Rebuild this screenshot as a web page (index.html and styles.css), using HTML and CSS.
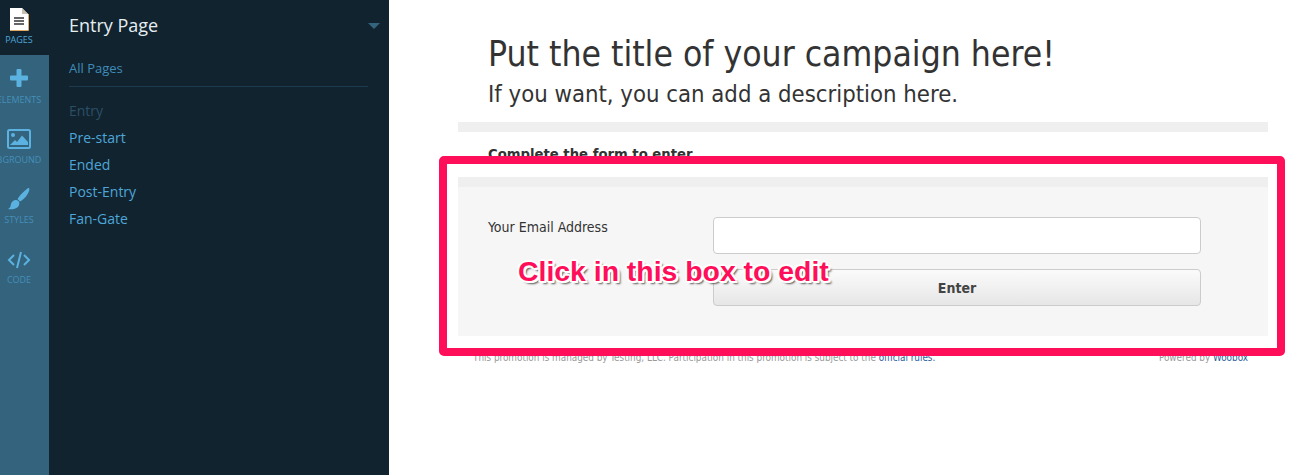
FILE: index.html
```html
<!DOCTYPE html>
<html lang="en">
<head>
  <meta charset="UTF-8">
  <title>Entry Page</title>
  <link rel="stylesheet" href="styles.css">
</head>
<body>

  <!-- Icon rail -->
  <nav class="rail">
    <a class="rail-item active">
      <svg class="rail-icon icon-page" width="20" height="24" viewBox="0 0 20 24">
        <path d="M1 1H13L19 7V23H1Z" fill="#fff"/>
        <path d="M1 23.500H19.500V7" fill="none" stroke="#e0a860" stroke-width="1"/>
        <path d="M13 1V7H19Z" fill="#c8c0b0"/>
        <path d="M5 11H15M5 14H15M5 17H15" stroke="#333" stroke-width="1.4"/>
      </svg>
      <span>PAGES</span>
    </a>
    <a class="rail-item">
      <svg class="rail-icon" width="18" height="18" viewBox="0 0 18 18">
        <path d="M7.500 0H10.500A1 1 0 0 1 11.500 1V6.500H17A1 1 0 0 1 18 7.500V10.500A1 1 0 0 1 17 11.500H11.500V17A1 1 0 0 1 10.500 18H7.500A1 1 0 0 1 6.500 17V11.500H1A1 1 0 0 1 0 10.500V7.500A1 1 0 0 1 1 6.500H6.500V1A1 1 0 0 1 7.500 0Z" fill="#5bb2e0"/>
      </svg>
      <span>ELEMENTS</span>
    </a>
    <a class="rail-item">
      <svg class="rail-icon icon-image" width="24" height="20" viewBox="0 0 24 20">
        <rect x="1" y="1" width="22" height="18" rx="1.500" fill="none" stroke="#5bb2e0" stroke-width="2"/>
        <circle cx="6" cy="6" r="2" fill="#5bb2e0"/>
        <path d="M3 16L8 11L10 13L15 6.500L21 13V16Z" fill="#5bb2e0"/>
      </svg>
      <span>BGROUND</span>
    </a>
    <a class="rail-item">
      <svg class="rail-icon icon-brush" width="24" height="24" viewBox="0 0 24 24">
        <path d="M22 1C23 2 22 5 20 8C18 11 15 13.500 13 14.500L10.500 12C12 9.500 15 6 17.500 4C19.500 2 21 0.500 22 1Z" fill="#5bb2e0"/>
        <path d="M9.500 13C12 13.500 13 15.500 12 18C11 21 7 23 1 22C3.500 21 3.500 19 4 17C4.500 14.500 7 12.500 9.500 13Z" fill="#5bb2e0"/>
      </svg>
      <span>STYLES</span>
    </a>
    <a class="rail-item">
      <svg class="rail-icon icon-code" width="24" height="18" viewBox="0 0 24 18">
        <path d="M7 4L2 9L7 14M17 4L22 9L17 14M14 1L10 17" fill="none" stroke="#5bb2e0" stroke-width="2"/>
      </svg>
      <span>CODE</span>
    </a>
  </nav>

  <!-- Pages panel -->
  <aside class="panel">
    <div class="panel-head">
      <h2>Entry Page</h2>
      <span class="caret"></span>
    </div>
    <a class="all-pages">All Pages</a>
    <ul class="page-list">
      <li class="current">Entry</li>
      <li>Pre-start</li>
      <li>Ended</li>
      <li>Post-Entry</li>
      <li>Fan-Gate</li>
    </ul>
  </aside>

  <!-- Campaign preview -->
  <main class="preview">
    <div class="campaign">
      <header class="campaign-head">
        <h1>Put the title of your campaign here!</h1>
        <p>If you want, you can add a description here.</p>
      </header>
      <div class="bar"></div>
      <h3 class="form-title">Complete the form to enter</h3>
      <div class="bar"></div>
      <form class="entry-form">
        <label for="email">Your Email Address</label>
        <div class="fields">
          <input type="text" id="email">
          <button type="button">Enter</button>
        </div>
      </form>
      <footer class="legal">
        <span>This promotion is managed by Testing, LLC. Participation in this promotion is subject to the <a>official rules.</a></span>
        <span>Powered by <a>Woobox</a></span>
      </footer>
    </div>

    <!-- Annotation drawn over the page -->
    <div class="callout"></div>
    <div class="callout-text">Click in this box to edit</div>
  </main>

</body>
</html>
```

FILE: styles.css
```css
* {
  box-sizing: border-box;
}

html, body {
  height: 100%;
}

body {
  margin: 0;
  display: flex;
  overflow: hidden;
  background: #fff;
}

/* Icon rail */
.rail {
  width: 49px;
  flex: none;
  background: #33637d;
  overflow: hidden;
  font-family: "Open Sans", sans-serif;
}

.rail-item {
  width: 38px;
  height: 60px;
  display: flex;
  flex-direction: column;
  align-items: center;
  justify-content: flex-end;
  padding-bottom: 9px;
  font-size: 9px;
  line-height: 12px;
  color: #458fb9;
  white-space: nowrap;
}

/* the dark tab runs the whole rail width, the content stays on the 38px column */
.rail-item.active {
  width: 49px;
  height: 55px;
  padding: 0 11px 9px 0;
  background: #11232f;
  color: #4ea6d8;
}

.rail-icon {
  flex: none;
  margin-bottom: 7px;
}

.icon-page,
.icon-brush {
  margin-bottom: 3px;
}

.icon-image,
.icon-code {
  margin-bottom: 5px;
}

/* Pages panel */
.panel {
  width: 340px;
  flex: none;
  background: #11232f;
  padding: 0 21px 0 20px;
  font-family: "Open Sans", sans-serif;
  font-size: 14px;
  color: #4ea6d8;
}

.panel-head {
  height: 53px;
  padding-bottom: 2px;
  display: flex;
  align-items: center;
  justify-content: space-between;
  margin-right: -12px;
}

.panel-head h2 {
  margin: -1px 0 0;
  font-size: 18px;
  font-weight: 400;
  color: #e6eef2;
}

.caret {
  width: 0;
  height: 0;
  border-left: 6px solid transparent;
  border-right: 6px solid transparent;
  border-top: 6px solid #35637e;
}

.all-pages {
  display: block;
  height: 34px;
  line-height: 30px;
  border-bottom: 1px solid #1d3b4e;
  color: #3f8cb8;
  font-size: 13px;
}

.page-list {
  list-style: none;
  margin: 10px 0 0;
  padding: 0;
}

.page-list li {
  height: 27px;
  line-height: 27px;
}

.page-list .current {
  color: #2b4f66;
}

/* Campaign preview */
.preview {
  flex: 1;
  position: relative;
  font-family: "DejaVu Sans", sans-serif;
  font-stretch: condensed;
}

.campaign {
  width: 810px;
  margin-left: 69px;
  color: #333;
}

.campaign-head {
  height: 122px;
  padding: 33px 30px 0;
}

.campaign-head h1 {
  margin: 0;
  font-size: 35.200px;
  line-height: 42px;
  font-weight: 400;
}

.campaign-head p {
  margin: 0;
  font-size: 23.700px;
  line-height: 38px;
}

.bar {
  height: 10px;
  background: #efefef;
}

.form-title {
  height: 45px;
  margin: 0;
  padding: 13px 30px 0;
  font-size: 14.700px;
  line-height: 18px;
}

.entry-form {
  height: 149px;
  display: flex;
  padding: 30px 67px 0 30px;
  background: #f6f6f6;
}

.entry-form label {
  width: 225px;
  flex: none;
  font-size: 14px;
  line-height: 20px;
}

.fields {
  flex: 1;
  display: flex;
  flex-direction: column;
  gap: 15px;
}

.fields input,
.fields button {
  height: 37px;
  border: 1px solid #ccc;
  border-radius: 4px;
}

.fields input {
  background: #fff;
}

.fields button {
  background: linear-gradient(#fbfbfb, #e6e6e6);
  font-family: "DejaVu Sans", sans-serif;
  font-stretch: condensed;
  font-size: 14px;
  font-weight: 700;
  color: #444;
}

.legal {
  display: flex;
  justify-content: space-between;
  padding: 16px 20px 0 15px;
  font-size: 9.850px;
  line-height: 12px;
  color: #999;
}

.legal a {
  color: #2a5e9a;
}

/* Annotation */
.callout {
  position: absolute;
  left: 50px;
  top: 156px;
  width: 846px;
  height: 200px;
  border: 8px solid #ff0f5a;
  border-radius: 5px;
}

.callout-text {
  position: absolute;
  left: 129px;
  top: 254px;
  font-family: "Liberation Sans", sans-serif;
  font-stretch: normal;
  font-size: 28.400px;
  line-height: 34px;
  font-weight: 700;
  color: #ff0f5a;
  white-space: nowrap;
  text-shadow: -2px -1px 0 #fff, 2px -1px 0 #fff, -2px 1px 0 #fff, 2px 1px 0 #fff, 0 -2px 0 #fff, 0 2px 0 #fff, 2px 2px 0 #fff, 3px 3px 2px #555;
}
```
